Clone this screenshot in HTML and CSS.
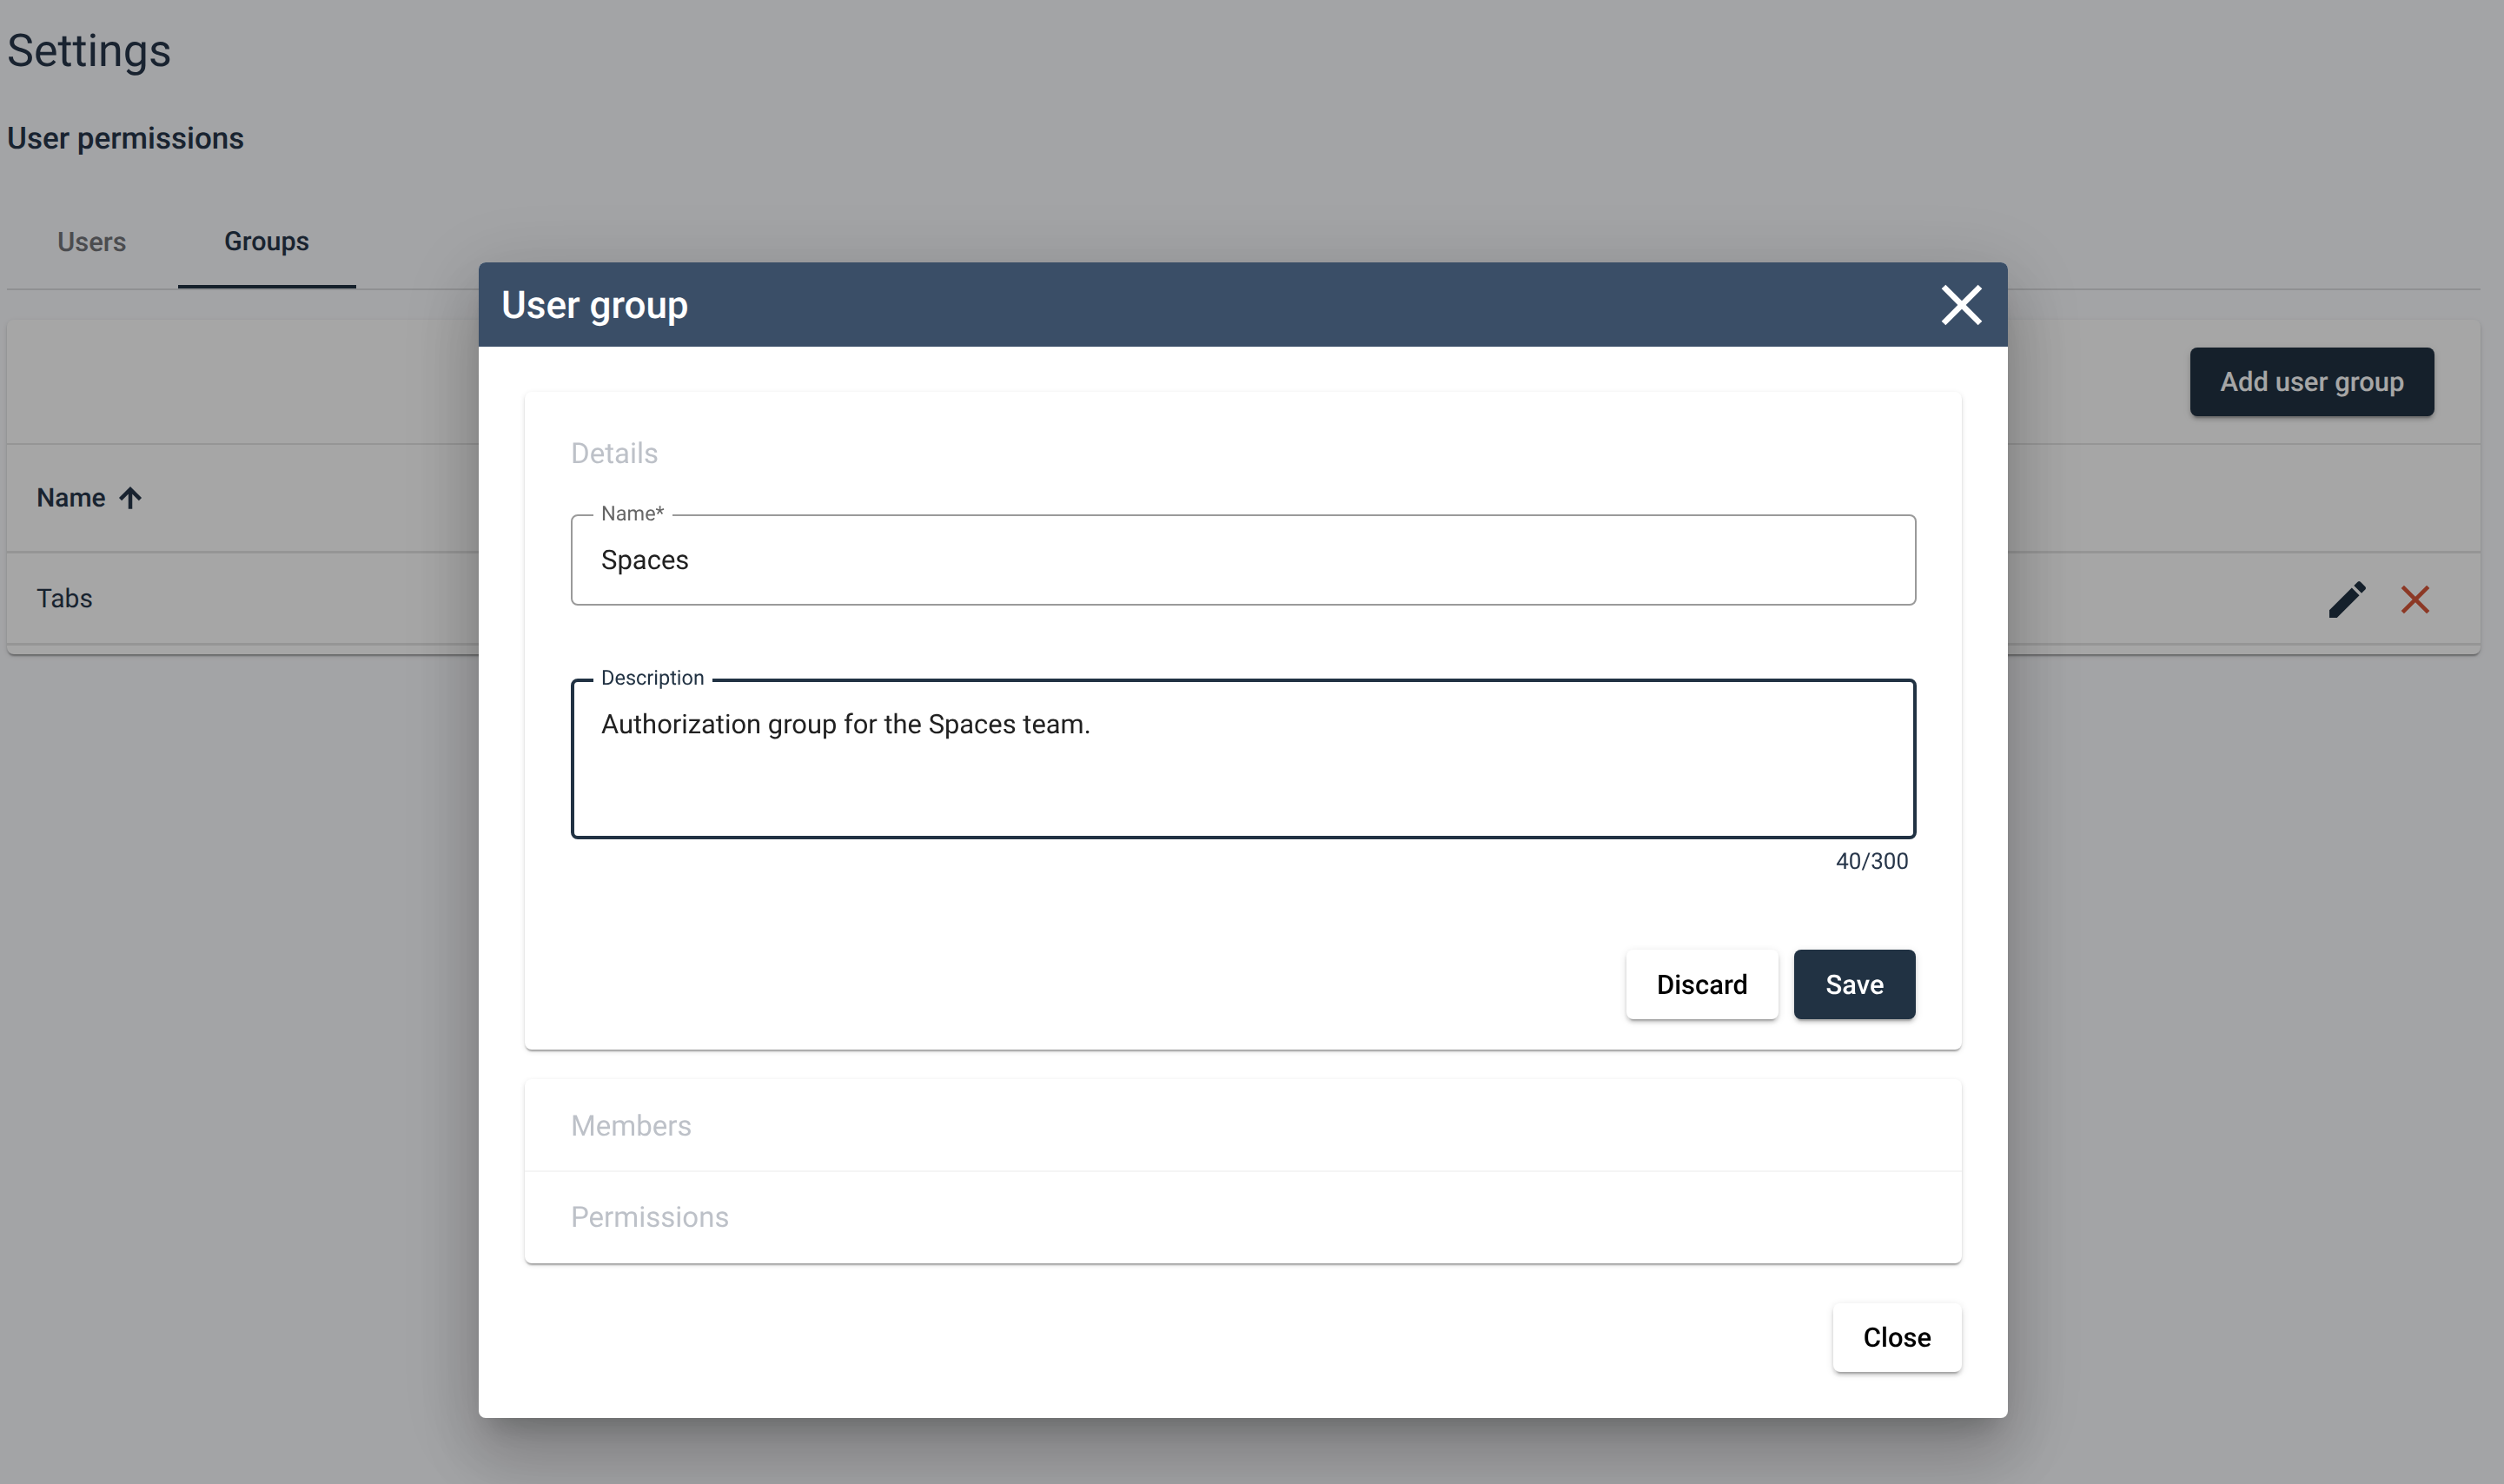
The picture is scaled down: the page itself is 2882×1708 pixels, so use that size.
FILE: index.html
```html
<!DOCTYPE html>
<html lang="en">
<head>
<meta charset="utf-8">
<title>Settings</title>
<link rel="stylesheet" href="styles.css">
</head>
<body>
<main class="page">
  <h1 class="page-title">Settings</h1>
  <h2 class="section-title">User permissions</h2>
  <nav class="tabs">
    <div class="tab">Users</div>
    <div class="tab tab-active">Groups</div>
  </nav>
  <section class="table-card">
    <div class="table-toolbar">
      <button class="btn btn-dark btn-add">Add user group</button>
    </div>
    <div class="table-head">
      <span>Name</span>
      <svg class="sort-icon" viewBox="0 0 24 24"><path d="M4 12l1.41 1.41L11 7.83V20h2V7.83l5.58 5.59L20 12l-8-8-8 8z"/></svg>
    </div>
    <div class="table-row">
      <span class="row-name">Tabs</span>
      <svg class="row-icon icon-edit" viewBox="0 0 24 24"><path d="M3 17.25V21h3.75L17.81 9.94l-3.75-3.75L3 17.25zM20.71 7.04c.39-.39.39-1.02 0-1.41l-2.34-2.34c-.39-.39-1.02-.39-1.41 0l-1.83 1.83 3.75 3.75 1.83-1.83z"/></svg>
      <svg class="row-icon icon-delete" viewBox="0 0 24 24"><path d="M19 6.41L17.59 5 12 10.59 6.41 5 5 6.41 10.59 12 5 17.59 6.41 19 12 13.41 17.59 19 19 17.59 13.41 12z"/></svg>
    </div>
  </section>
</main>

<div class="backdrop">
  <div class="dialog">
    <header class="dialog-header">
      <span class="dialog-title">User group</span>
      <svg class="dialog-close" viewBox="0 0 24 24"><path d="M19 6.41L17.59 5 12 10.59 6.41 5 5 6.41 10.59 12 5 17.59 6.41 19 12 13.41 17.59 19 19 17.59 13.41 12z"/></svg>
    </header>
    <div class="dialog-body">
      <section class="panel panel-details">
        <h3 class="panel-title">Details</h3>
        <div class="field field-name">
          <label class="field-label">Name*</label>
          <div class="field-value">Spaces</div>
        </div>
        <div class="field field-desc">
          <label class="field-label field-label-focus">Description</label>
          <div class="field-value">Authorization group for the Spaces team.</div>
        </div>
        <div class="counter">40/300</div>
        <div class="panel-actions">
          <button class="btn btn-light btn-discard">Discard</button>
          <button class="btn btn-save">Save</button>
        </div>
      </section>
      <section class="panel panel-list">
        <div class="list-item">Members</div>
        <div class="list-item">Permissions</div>
      </section>
      <div class="dialog-actions">
        <button class="btn btn-light btn-close">Close</button>
      </div>
    </div>
  </div>
</div>
</body>
</html>
```

FILE: styles.css
```css
* { box-sizing: border-box; }

html, body { height: 100%; }

body {
  margin: 0;
  overflow: hidden;
  background: #fbfcff;
  color: #27364a;
  font-family: Roboto, "Liberation Sans", sans-serif;
  text-rendering: geometricPrecision;
}

.page { padding: 0 27px 0 8px; }

.page-title {
  margin: 0;
  padding-top: 30px;
  font-size: 52px;
  line-height: 58px;
  font-weight: 400;
  color: #27364a;
}

.section-title {
  margin: 0;
  padding-top: 51px;
  font-size: 35px;
  line-height: 42px;
  font-weight: 500;
  color: #27364a;
}

.tabs {
  display: flex;
  margin-top: 31px;
  height: 122px;
  border-bottom: 2px solid #dcdde0;
}

.tab {
  width: 197px;
  padding-left: 58px;
  padding-top: 49px;
  font-size: 31px;
  line-height: 36px;
  font-weight: 500;
  color: #73757a;
}

.tab-active {
  width: 205px;
  padding-left: 53px;
  height: 120px;
  border-bottom: 4px solid #213243;
  font-size: 30.5px;
  color: #27364a;
}

.table-card {
  margin-top: 34px;
  height: 385px;
  background: #fff;
  border-radius: 8px;
  box-shadow: 0 4px 2px -2px rgba(0,0,0,.2), 0 2px 2px rgba(0,0,0,.14), 0 2px 6px rgba(0,0,0,.12);
}

.table-toolbar {
  display: flex;
  justify-content: flex-end;
  height: 144px;
  padding: 32px 53px 0 0;
  border-bottom: 2px solid #e5e5e5;
}

.table-head {
  display: flex;
  align-items: center;
  gap: 10px;
  height: 125px;
  padding-left: 34px;
  border-bottom: 3px solid #e5e5e5;
  font-size: 30px;
  font-weight: 500;
  color: #27364a;
}

.sort-icon {
  width: 36px;
  height: 36px;
  fill: #27364a;
  stroke: #27364a;
  stroke-width: 1;
}

.table-row {
  display: flex;
  align-items: center;
  height: 106px;
  padding-left: 34px;
  padding-right: 47px;
  border-bottom: 3px solid #e5e5e5;
  font-size: 30px;
  color: #27364a;
}

.row-name { flex: 1; margin-top: 2px; }

.row-icon { width: 56px; height: 56px; margin-top: 2px; }
.icon-edit { fill: #213243; margin-right: 22px; }
.icon-delete { fill: #d7573a; }

.backdrop {
  position: fixed;
  inset: 0;
  padding: 302px 0 0 551px;
  background: rgba(0,0,0,.35);
}

.dialog {
  width: 1760px;
  height: 1330px;
  background: #fff;
  border-radius: 8px;
  box-shadow: 0 22px 30px -14px rgba(0,0,0,.2), 0 48px 76px 6px rgba(0,0,0,.14), 0 18px 92px 16px rgba(0,0,0,.12);
}

.dialog-header {
  display: flex;
  align-items: center;
  justify-content: space-between;
  height: 97px;
  padding: 0 13px 0 26px;
  background: #3a4e67;
  border-radius: 8px 8px 0 0;
  color: #fff;
}

.dialog-title { font-size: 44px; font-weight: 500; }

.dialog-close { width: 80px; height: 80px; fill: #fff; }

.dialog-body { padding: 52px 53px 0; }

.panel {
  background: #fff;
  border-radius: 8px;
  box-shadow: 0 4px 2px -2px rgba(0,0,0,.2), 0 2px 2px rgba(0,0,0,.14), 0 2px 6px rgba(0,0,0,.12);
}

.panel-details {
  height: 757px;
  padding: 0 52px 0 53px;
}

.panel-title {
  margin: 0;
  height: 141px;
  padding-top: 53px;
  font-size: 33px;
  line-height: 38px;
  font-weight: 400;
  color: #bdc1c8;
}

.field {
  position: relative;
  border: 2px solid #9a9a9a;
  border-radius: 8px;
  padding: 0 33px;
}

.field-name { height: 105px; margin-bottom: 84px; }

.field-desc {
  height: 185px;
  border: 4px solid #213243;
  padding: 0 31px;
}

.field-label {
  position: absolute;
  left: 24px;
  top: -17px;
  padding: 0 9px;
  background: #fff;
  font-size: 23.5px;
  line-height: 28px;
  color: #666;
}

.field-label-focus { left: 22px; top: -19px; color: #213243; }

.field-value {
  padding-top: 32px;
  font-size: 31px;
  line-height: 38px;
  color: #212121;
}

.field-desc .field-value { padding-top: 30px; font-size: 30.9px; }

.counter {
  padding: 12px 9px 0 0;
  height: 48px;
  text-align: right;
  font-size: 26px;
  line-height: 28px;
  color: #27364a;
}

.panel-actions {
  display: flex;
  justify-content: flex-end;
  gap: 18px;
  margin-top: 79px;
  padding-right: 1px;
}

.btn {
  display: block;
  height: 80px;
  padding: 0;
  border: 0;
  border-radius: 8px;
  font-family: inherit;
  font-size: 31px;
  font-weight: 500;
  text-rendering: geometricPrecision;
  box-shadow: 0 6px 2px -4px rgba(0,0,0,.2), 0 4px 4px rgba(0,0,0,.14), 0 2px 10px rgba(0,0,0,.12);
}

.btn-dark, .btn-save { background: #213243; color: #fff; }
.btn-light { background: #fff; color: #000; }
.btn-add { width: 281px; height: 79px; }
.btn-discard { width: 175px; }
.btn-save { width: 140px; }
.btn-close { width: 148px; height: 79px; }

.panel-list { margin-top: 34px; height: 212px; }

.list-item {
  height: 105px;
  padding: 36px 0 0 53px;
  font-size: 33px;
  line-height: 38px;
  color: #bdc1c8;
}

.list-item + .list-item { height: 107px; border-top: 2px solid #f5f5f5; padding-top: 34px; }

.dialog-actions {
  display: flex;
  justify-content: flex-end;
  margin-top: 46px;
}
```
